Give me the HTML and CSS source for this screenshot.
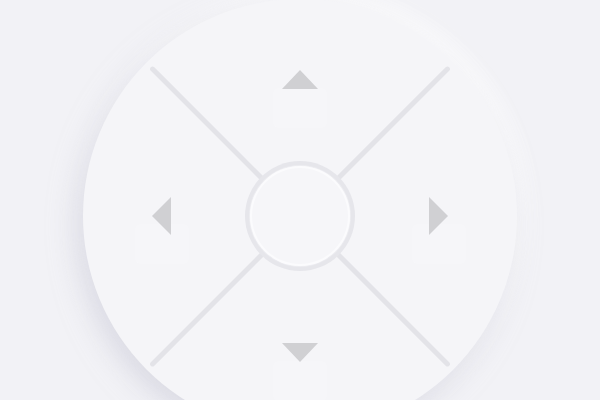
FILE: index.html
```html
<!DOCTYPE html>
<html>
<head>
<meta charset="utf-8">
<link rel="stylesheet" href="styles.css">
</head>
<body>
<div class="stage">
  <div class="pad">
    <div class="divider d1"></div>
    <div class="divider d2"></div>
    <div class="cell up-cell"><span class="tri tri-up"></span><span class="ghost"></span></div>
    <div class="cell left-cell"><span class="tri tri-left"></span><span class="ghost"></span></div>
    <div class="cell mid-cell"><div class="knob"><div class="knob-inner"></div></div></div>
    <div class="cell right-cell"><span class="tri tri-right"></span><span class="ghost"></span></div>
    <div class="cell down-cell"><span class="tri tri-down"></span><span class="ghost"></span></div>
  </div>
</div>
</body>
</html>
```

FILE: styles.css
```css
html, body {
  margin: 0;
  padding: 0;
  width: 600px;
  height: 400px;
  overflow: hidden;
  background: #f2f2f6;
  font-family: "Liberation Sans", sans-serif;
}
.stage {
  width: 600px;
  height: 400px;
  display: flex;
  justify-content: center;
  margin-top: -1px;
}
.pad {
  position: relative;
  flex: none;
  width: 434px;
  height: 434px;
  border-radius: 50%;
  background: #f5f5f8;
  box-shadow: -6px 10px 28px rgba(196, 196, 212, 0.55), 6px -8px 22px rgba(255, 255, 255, 0.9);
  box-sizing: border-box;
  padding: 71px 69px;
  display: grid;
  grid-template-columns: 19px 1fr 19px;
  grid-template-rows: 19px 1fr 19px;
  grid-template-areas:
    ". up ."
    "left mid right"
    ". down .";
}
.divider {
  position: absolute;
  left: 50%;
  top: 50%;
  width: 422px;
  height: 5px;
  margin-left: -211px;
  margin-top: -2.5px;
  background: #e3e3e8;
  border-radius: 3px;
}
.d1 { transform: rotate(45deg); }
.d2 { transform: rotate(-45deg); }
.cell {
  position: relative;
  display: flex;
  align-items: center;
  justify-content: center;
}
.up-cell { grid-area: up; }
.down-cell { grid-area: down; }
.left-cell { grid-area: left; }
.right-cell { grid-area: right; }
.mid-cell { grid-area: mid; }
.tri {
  position: relative;
  z-index: 2;
  width: 0;
  height: 0;
}
.tri-up {
  border-left: 18.5px solid transparent;
  border-right: 18.5px solid transparent;
  border-bottom: 19px solid #d0d0d3;
}
.tri-down {
  border-left: 18.5px solid transparent;
  border-right: 18.5px solid transparent;
  border-top: 19px solid #d0d0d3;
}
.tri-left {
  border-top: 19px solid transparent;
  border-bottom: 19px solid transparent;
  border-right: 19px solid #d0d0d3;
}
.tri-right {
  border-top: 19px solid transparent;
  border-bottom: 19px solid transparent;
  border-left: 19px solid #d0d0d3;
}
.ghost {
  position: absolute;
  width: 54px;
  height: 40px;
  left: 50%;
  top: 50%;
  margin-left: -27px;
  margin-top: 8px;
  background: rgba(255, 255, 255, 0.18);
  border-radius: 6px;
  z-index: 1;
}
.knob {
  position: relative;
  z-index: 3;
  width: 110px;
  height: 110px;
  border-radius: 50%;
  background: #e6e6eb;
  display: flex;
  align-items: center;
  justify-content: center;
}
.knob-inner {
  width: 100px;
  height: 100px;
  border-radius: 50%;
  background: #f6f6f9;
  box-shadow: inset 0 0 0 2px #fbfbfd, 0 0 0 1px #ededf1;
}
```
